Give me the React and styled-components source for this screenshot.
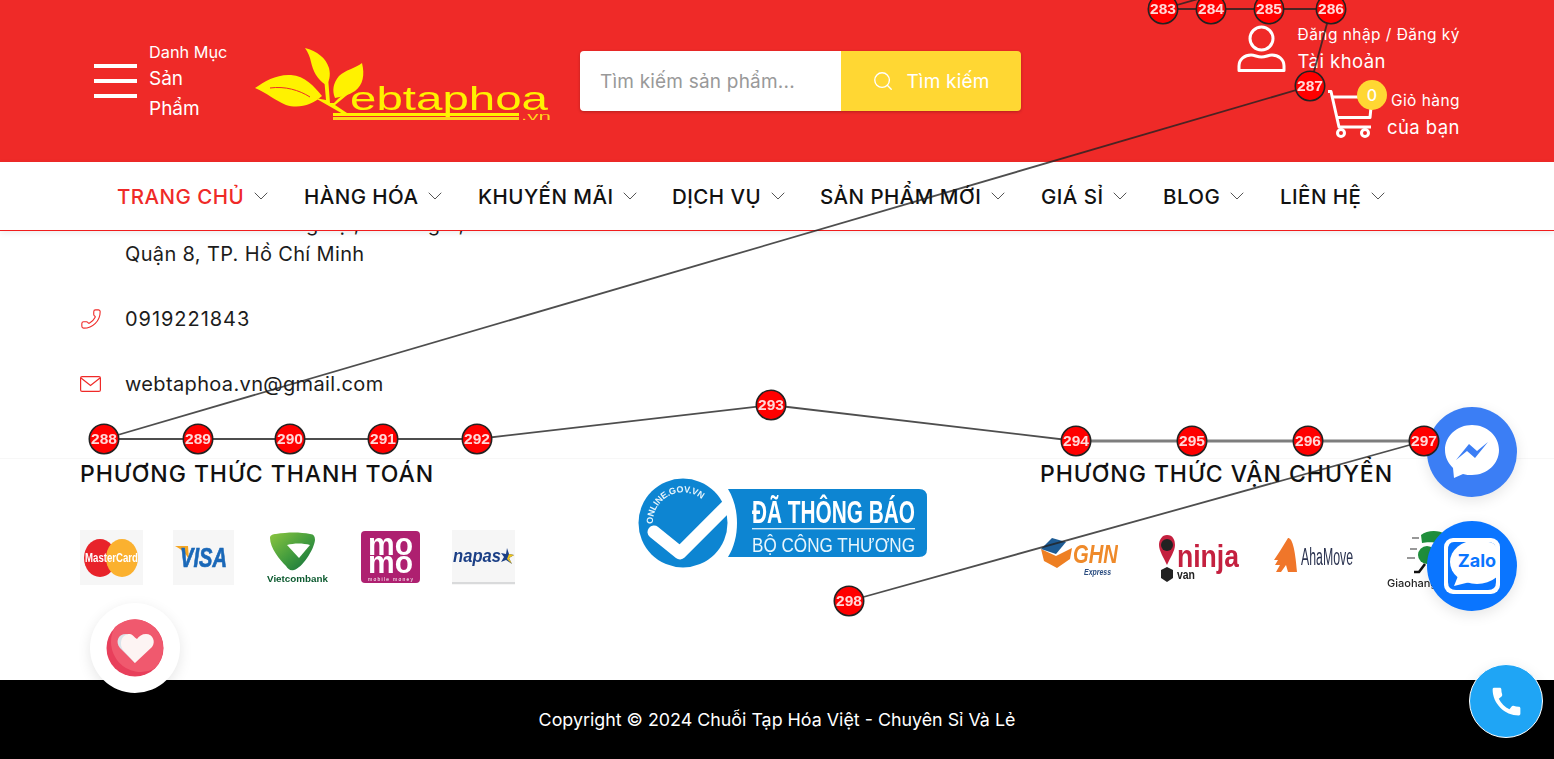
import React from 'react';
import styled, { createGlobalStyle } from 'styled-components';
import { ChevronDown, Search, Phone } from 'lucide-react';
import { MdCall } from 'react-icons/md';

const GlobalStyle = createGlobalStyle`
  html, body {
    margin: 0;
    padding: 0;
    background: #fff;
    overflow: hidden;
  }
  * { box-sizing: border-box; }
  body {
    font-family: Inter, "Noto Sans", sans-serif;
    color: #111;
  }
`;

const Page = styled.div`
  position: relative;
  width: 1554px;
  height: 759px;
  display: flex;
  flex-direction: column;
  overflow: hidden;
`;

const Header = styled.header`
  height: 162px;
  flex: none;
  background: #ef2a28;
  color: #fff;
  display: flex;
  align-items: center;
  padding: 0 94px 0 94px;
`;

const MenuToggle = styled.div`
  display: flex;
  align-items: center;
  gap: 12px;
  width: 161px;
`;

const Burger = styled.div`
  width: 43px;
  flex: none;
  display: flex;
  flex-direction: column;
  gap: 11px;
  & > span {
    display: block;
    height: 4px;
    background: #fff;
  }
`;

const MenuText = styled.div`
  width: 60px;
  margin-top: 2px;
  font-size: 19px;
  line-height: 30px;
  & > small {
    display: block;
    font-size: 16.3px;
    line-height: 24px;
    white-space: nowrap;
  }
`;

const LogoSvg = styled.svg`
  flex: none;
  display: block;
  margin-top: 10px;
  filter: blur(0.3px);
`;

const SearchBox = styled.div`
  display: flex;
  flex: none;
  width: 441px;
  height: 60px;
  margin-left: 25px;
  border-radius: 4px;
  overflow: hidden;
  box-shadow: 0 1px 3px rgba(0, 0, 0, 0.25);
`;

const SearchInput = styled.div`
  flex: 1;
  background: #fff;
  color: #999;
  font-size: 19px;
  letter-spacing: 0.2px;
  display: flex;
  align-items: center;
  padding-left: 20px;
`;

const SearchButton = styled.div`
  width: 180px;
  background: #ffd733;
  color: #fff;
  font-size: 19px;
  letter-spacing: 0.2px;
  display: flex;
  align-items: center;
  justify-content: center;
  gap: 12px;
`;

const UserArea = styled.div`
  margin-left: auto;
  display: flex;
  flex-direction: column;
  align-items: flex-end;
  gap: 12px;
`;

const UserRow = styled.div`
  display: flex;
  align-items: center;
  gap: ${({ $gap }) => $gap}px;
`;

const UserText = styled.div`
  text-align: ${({ $right }) => ($right ? 'right' : 'left')};
  font-size: 18.5px;
  letter-spacing: 0.45px;
  line-height: 27px;
  & > small {
    display: block;
    font-size: 15.5px;
    line-height: 27px;
    white-space: nowrap;
  }
`;

const CartIcon = styled.div`
  position: relative;
  width: 45px;
  height: 48px;
  & > svg { display: block; }
`;

const CartCount = styled.span`
  position: absolute;
  top: -10px;
  left: 29px;
  width: 30px;
  height: 30px;
  border-radius: 50%;
  background: #ffd733;
  color: #fff;
  font-size: 16px;
  font-weight: 500;
  display: flex;
  align-items: center;
  justify-content: center;
`;

const Nav = styled.nav`
  position: relative;
  z-index: 2;
  height: 69px;
  flex: none;
  background: #fff;
  border-bottom: 1px solid #f01c1c;
  box-shadow: 0 2px 6px rgba(0, 0, 0, 0.08);
  display: flex;
  align-items: center;
  padding-left: 117px;
`;

const NavItem = styled.div`
  width: ${({ $width }) => $width}px;
  display: flex;
  align-items: center;
  gap: 5px;
  font-size: 20.5px;
  font-weight: 500;
  letter-spacing: 0.45px;
  white-space: nowrap;
  color: ${({ $active }) => ($active ? '#ef2a28' : '#111')};
  & > svg { color: #555; }
`;

const Main = styled.main`
  flex: 1;
  min-height: 0;
  overflow: hidden;
  background: #fff;
`;

const ContactList = styled.div`
  margin-top: -22px;
  padding-left: 80px;
  display: flex;
  flex-direction: column;
  gap: 35px;
`;

const ContactRow = styled.div`
  display: flex;
  align-items: center;
  font-size: 20px;
  line-height: 30px;
  letter-spacing: ${({ $spacing }) => $spacing || 0.35}px;
  color: #1c1c1c;
`;

const ContactIcon = styled.div`
  width: 45px;
  flex: none;
  color: #ef2a28;
  display: flex;
  & > svg { display: block; }
`;

const Methods = styled.section`
  margin-top: 59px;
  padding-left: 80px;
  border-top: 1px solid #f7f7f7;
  display: grid;
  grid-template-columns: 558px 402px 1fr;
`;

const MethodTitle = styled.h3`
  margin: 0;
  font-size: 23px;
  line-height: 30px;
  font-weight: 500;
  letter-spacing: 0.95px;
  white-space: nowrap;
  color: #111;
`;

const MethodLogos = styled.div`
  margin-top: 41px;
  display: flex;
  align-items: flex-start;
`;

const BrandSvg = styled.svg`
  flex: none;
  display: block;
  margin-right: ${({ $gap }) => $gap}px;
  filter: blur(0.35px);
`;

const NoticeSvg = styled.svg`
  display: block;
  margin-top: 19px;
  filter: blur(0.3px);
`;

const Footer = styled.footer`
  height: 79px;
  flex: none;
  background: #000;
  color: #fff;
  font-size: 17.85px;
  font-weight: 400;
  display: flex;
  align-items: center;
  justify-content: center;
`;

const FloatButton = styled.div`
  position: absolute;
  z-index: 3;
  left: ${({ $x }) => $x}px;
  top: ${({ $y }) => $y}px;
  width: ${({ $size }) => $size}px;
  height: ${({ $size }) => $size}px;
  border-radius: 50%;
  background: ${({ $bg }) => $bg};
  border: ${({ $ring }) => ($ring ? '1px solid #fff' : 'none')};
  box-shadow: 0 4px 14px rgba(0, 0, 0, 0.1);
  display: flex;
  align-items: center;
  justify-content: center;
  color: #fff;
  & > svg { display: block; }
`;

const Graph = styled.svg`
  position: absolute;
  z-index: 4;
  left: 0;
  top: 0;
  pointer-events: none;
`;

const NodeLabel = styled.text`
  font-family: "Liberation Sans", Arial, sans-serif;
  font-size: 15.5px;
  font-weight: 700;
  fill: #fff;
  fill-opacity: 0.85;
  text-anchor: middle;
  filter: blur(0.4px);
`;

const navItems = [
  { label: 'TRANG CHỦ', width: 187, active: true },
  { label: 'HÀNG HÓA', width: 174 },
  { label: 'KHUYẾN MÃI', width: 194 },
  { label: 'DỊCH VỤ', width: 148 },
  { label: 'SẢN PHẨM MỚI', width: 221 },
  { label: 'GIÁ SỈ', width: 122 },
  { label: 'BLOG', width: 117 },
  { label: 'LIÊN HỆ', width: 120 },
];

const nodes = [
  [283, 1163, 9], [284, 1211, 9], [285, 1269, 9], [286, 1331, 9], [287, 1310, 86],
  [288, 104, 439], [289, 198, 439], [290, 290, 439], [291, 383, 439], [292, 477, 439],
  [293, 771, 405], [294, 1076, 441], [295, 1192, 441], [296, 1308, 441], [297, 1424, 441],
  [298, 849, 601],
];

const LogoMark = () => (
  <LogoSvg width="300" height="78" viewBox="0 0 300 78">
    <g fill="#fff200">
      <path d="M0 41 C10 34 22 27 36 28 C50 29 59 39 67 49 C57 58 44 62 31 58 C21 54 12 46 0 41 Z" />
      <path d="M50 1 C62 4 71 11 74 21 C76 29 74 35 71 38 C62 32 58 24 56 15 C55 10 53 5 50 1 Z" />
      <path d="M107 16 C110 28 108 38 100 44 C94 48 86 50 80 51 C77 44 78 36 84 29 C90 23 101 21 107 16 Z" />
      <path d="M69 30 L73 30 L75 56 L79 56 C84 50 90 46 97 44 L80 58 L92 66 L88 67 L60 51 L71 53 Z" />
      <rect x="78" y="66" width="186" height="3" />
      <rect x="78" y="70" width="186" height="3" fill="#ffd21c" />
    </g>
    <path d="M15 41 C30 39 44 43 55 50" stroke="#ef2a28" strokeWidth="1" fill="none" />
    <text x="95" y="63" fill="#fff200" fontFamily="Liberation Sans" fontSize="33" textLength="198" lengthAdjust="spacingAndGlyphs">ebtaphoa</text>
    <text x="266" y="73" fill="#ffd21c" fontFamily="Liberation Sans" fontSize="11" textLength="30" lengthAdjust="spacingAndGlyphs">.vn</text>
  </LogoSvg>
);

const UserGlyph = () => (
  <svg width="50" height="49" viewBox="0 0 50 49" fill="none" stroke="#fff" strokeWidth="3">
    <circle cx="24.5" cy="14.5" r="11.5" />
    <path d="M2 46.5 V42 C2 35 8 31 14 31 C18 31 20 33 24.5 33 C29 33 31 31 35 31 C41 31 47 35 47 42 V46.5 Z" strokeLinejoin="round" />
  </svg>
);

const CartGlyph = () => (
  <svg width="45" height="48" viewBox="0 0 45 48" fill="none" stroke="#fff" strokeWidth="3" strokeLinejoin="round">
    <path d="M0 1.5 H3 L11 37 H43" />
    <path d="M5 7 H44 L42 27.5 H9" />
    <circle cx="13" cy="43" r="3.5" />
    <circle cx="37" cy="43" r="3.5" />
  </svg>
);

const MasterCard = () => (
  <BrandSvg $gap={30} width="63" height="55" viewBox="0 0 63 55">
    <rect width="63" height="55" fill="#f6f6f6" />
    <ellipse cx="20" cy="28" rx="16" ry="19" fill="#e8232a" />
    <ellipse cx="42" cy="28" rx="16" ry="19" fill="#fbb12f" />
    <text x="5" y="32" fill="#fff" fontFamily="Liberation Sans" fontWeight="700" fontSize="12" textLength="53" lengthAdjust="spacingAndGlyphs">MasterCard</text>
  </BrandSvg>
);

const Visa = () => (
  <BrandSvg $gap={32} width="61" height="55" viewBox="0 0 61 55">
    <rect width="61" height="55" fill="#f6f6f6" />
    <path d="M2 16 H15 L16 30 C13 23 8 19 2 16 Z" fill="#f5a623" />
    <text x="7" y="37" fill="#1a68b8" stroke="#1a68b8" strokeWidth="0.7" fontFamily="Liberation Sans" fontWeight="700" fontStyle="italic" fontSize="28" textLength="47" lengthAdjust="spacingAndGlyphs">VISA</text>
  </BrandSvg>
);

const Vietcombank = () => (
  <BrandSvg $gap={32} width="63" height="55" viewBox="0 0 63 55">
    <defs>
      <linearGradient id="vcbShield" x1="0" y1="0" x2="1" y2="1">
        <stop offset="0" stopColor="#8cc63f" />
        <stop offset="0.55" stopColor="#3f9a3e" />
        <stop offset="1" stopColor="#0f6b3d" />
      </linearGradient>
    </defs>
    <path d="M4 8 C4 5 7 4 10 4 C22 2 34 2 44 4 C48 4 49 7 49 10 C48 20 36 38 28 40 C24 41 22 39 20 36 C14 30 4 18 4 8 Z" fill="url(#vcbShield)" />
    <path d="M21 15 C28 13 37 13 44 15 L33 28 Z" fill="#fff" />
    <text x="1" y="52" fill="#0c5a2f" fontFamily="Liberation Sans" fontWeight="700" fontSize="9" textLength="61" lengthAdjust="spacingAndGlyphs">Vietcombank</text>
  </BrandSvg>
);

const Momo = () => (
  <BrandSvg $gap={32} width="59" height="55" viewBox="0 0 59 55">
    <rect y="1" width="59" height="52" rx="4" fill="#ae2070" />
    <text x="7" y="25" fill="#fff" fontFamily="Liberation Sans" fontWeight="700" fontSize="32" textLength="45" lengthAdjust="spacingAndGlyphs">mo</text>
    <text x="7" y="43" fill="#fff" fontFamily="Liberation Sans" fontWeight="700" fontSize="32" textLength="45" lengthAdjust="spacingAndGlyphs">mo</text>
    <text x="7" y="50.5" fill="#fff" fontFamily="Liberation Sans" fontSize="5" textLength="45">mobile money</text>
  </BrandSvg>
);

const Napas = () => (
  <BrandSvg $gap={0} width="63" height="55" viewBox="0 0 63 55">
    <rect width="63" height="55" fill="#f6f6f6" />
    <rect y="52" width="63" height="2" fill="#d9dadb" />
    <text x="1" y="32" fill="#1b3f86" fontFamily="Liberation Sans" fontWeight="700" fontStyle="italic" fontSize="18" textLength="48" lengthAdjust="spacingAndGlyphs">napas</text>
    <path d="M55 18 L57 24 L62 25 L57 28 L60 34 L54 30 L49 32 L52 27 L49 23 L54 24 Z" fill="#1b3f86" />
    <path d="M57 24 L62 25 L57 28 L60 34 L55 29 Z" fill="#f0c419" />
  </BrandSvg>
);

const Ghn = () => (
  <BrandSvg $gap={41} width="78" height="55" viewBox="0 -4 78 55">
    <path d="M1 15 L16 22 L32 14 L30 25 L17 34 L4 27 Z" fill="#ee7f22" />
    <path d="M1 15 L12 4 L26 8 L16 20 Z" fill="#1e5b93" />
    <text x="33" y="29" fill="#ef8a2a" fontFamily="Liberation Sans" fontWeight="700" fontStyle="italic" fontSize="26" textLength="45" lengthAdjust="spacingAndGlyphs">GHN</text>
    <text x="44" y="41" fill="#2b4d80" fontFamily="Liberation Sans" fontWeight="700" fontStyle="italic" fontSize="9" textLength="27" lengthAdjust="spacingAndGlyphs">Express</text>
  </BrandSvg>
);

const Ninja = () => (
  <BrandSvg $gap={35} width="80" height="55" viewBox="0 -5 80 55">
    <path d="M8 0 C14 0 16 5 16 10 C16 16 11 23 8 30 C5 23 0 16 0 10 C0 5 3 0 8 0 Z" fill="#c4203f" />
    <circle cx="8" cy="10" r="6" fill="#222" />
    <path d="M2 35 L8 32 L14 35 V43 L8 47 L2 43 Z" fill="#222" />
    <text x="18" y="32" fill="#c4203f" fontFamily="Liberation Sans" fontWeight="700" fontSize="31" textLength="62" lengthAdjust="spacingAndGlyphs">ninja</text>
    <text x="18" y="44" fill="#222" fontFamily="Liberation Sans" fontWeight="700" fontSize="13" textLength="18" lengthAdjust="spacingAndGlyphs">van</text>
  </BrandSvg>
);

const AhaMove = () => (
  <BrandSvg $gap={33} width="80" height="55" viewBox="0 -5 80 55">
    <path d="M14 3 C18 3 21 12 23 37 H14 L12 30 L7 37 H2 L6 30 H1 L4 25 H0 L6 16 Z" fill="#f0762a" />
    <text x="27" y="30" fill="#2b3350" fontFamily="Liberation Sans" fontWeight="400" fontSize="23" textLength="52" lengthAdjust="spacingAndGlyphs">AhaMove</text>
  </BrandSvg>
);

const Giaohang = () => (
  <BrandSvg $gap={0} width="84" height="62" viewBox="0 0 84 62">
    <path d="M34 5 C40 0 52 0 58 4 L54 14 C48 12 40 12 35 13 Z" fill="#1f8f3c" />
    <circle cx="40" cy="25" r="9" fill="#1f8f3c" />
    <path d="M38 34 L32 42 L27 42 M42 34 L48 42" stroke="#111" strokeWidth="2.5" fill="none" />
    <path d="M25 8 H32 M23 19 H30 M20 28 H28" stroke="#777" strokeWidth="1.3" />
    <text x="0" y="57" fill="#222" fontFamily="Inter" fontWeight="500" fontSize="11">Giaohangnhanh</text>
  </BrandSvg>
);

const NoticeBadge = () => (
  <NoticeSvg width="292" height="94" viewBox="0 0 292 94">
    <defs>
      <path id="noticeArc" d="M15 46 A30 30 0 0 1 66 23" />
    </defs>
    <circle cx="45" cy="45" r="44.5" fill="#0d85d2" />
    <path d="M16 54 L42 75 L92 25" stroke="#fff" strokeWidth="13" strokeLinecap="round" strokeLinejoin="round" fill="none" />
    <text fill="#e8f5fc" fontFamily="Liberation Sans" fontWeight="700" fontSize="9" textLength="69">
      <textPath href="#noticeArc">ONLINE.GOV.VN</textPath>
    </text>
    <path d="M90 11 H281 Q289 11 289 19 V71 Q289 79 281 79 H90 C102 60 102 30 90 11 Z" fill="#0d85d2" />
    <text x="114" y="45" fill="#fff" fontFamily="Liberation Sans" fontWeight="700" fontSize="32" textLength="163" lengthAdjust="spacingAndGlyphs">ĐÃ THÔNG BÁO</text>
    <rect x="114" y="50" width="163" height="1.4" fill="#cfe9f8" />
    <text x="114" y="74" fill="#e8f5fc" fontFamily="Liberation Sans" fontSize="20" textLength="163" lengthAdjust="spacingAndGlyphs">BỘ CÔNG THƯƠNG</text>
  </NoticeSvg>
);

const HeartGlyph = () => (
  <svg width="58" height="58" viewBox="0 0 58 58">
    <circle cx="29" cy="29" r="28.5" fill="#e83f5b" />
    <path d="M9 8 A28.5 28.5 0 0 1 48 50 A30 30 0 0 1 9 8 Z" fill="#f0596e" />
    <path d="M29 44 L14 29 C9 23 12 15 20 15 C24 15 27 18 29 21 Z" fill="#dbe4ea" />
    <path d="M29 44 L17 31 C13 25 15 15 24 15 C26 15 28 18 31 20 C33 17 36 15 40 15 C47 15 50 23 46 28 Z" fill="#fdf4f3" />
  </svg>
);

const MessengerGlyph = () => (
  <svg width="56" height="56" viewBox="0 0 56 56">
    <path d="M28 1 C13 1 1 12 1 26 C1 33 4 39 9 44 L10 54 L19 50 C22 51 25 51 28 51 C43 51 55 40 55 26 C55 12 43 1 28 1 Z" fill="#fff" />
    <path d="M12 36 L25 20 L33 27 L44 18 L31 34 L23 27 Z" fill="#3b7ef5" />
  </svg>
);

const ZaloGlyph = () => (
  <svg width="56" height="56" viewBox="0 0 56 56">
    <rect width="56" height="56" rx="9" fill="#fff" />
    <path d="M10 4 H44 Q52 4 52 12 V44 Q52 52 44 52 H12 Q4 52 4 44 V12 Q4 4 10 4 Z" fill="#0a75ff" />
    <ellipse cx="33" cy="24" rx="27" ry="22" fill="#fff" />
    <path d="M14 38 L10 48 L26 44 Z" fill="#fff" />
    <path d="M44 4 Q52 4 52 12 V30 H34 V4 Z" fill="#fff" />
    <text x="33" y="29" fill="#0a75ff" textAnchor="middle" fontFamily="Inter" fontWeight="700" fontSize="18">Zalo</text>
  </svg>
);

const App = () => (
  <Page>
    <GlobalStyle />
    <Header>
      <MenuToggle>
        <Burger><span /><span /><span /></Burger>
        <MenuText>
          <small>Danh Mục</small>
          Sản Phẩm
        </MenuText>
      </MenuToggle>
      <LogoMark />
      <SearchBox>
        <SearchInput>Tìm kiếm sản phẩm...</SearchInput>
        <SearchButton>
          <Search size={22} strokeWidth={1.5} />
          Tìm kiếm
        </SearchButton>
      </SearchBox>
      <UserArea>
        <UserRow $gap={11}>
          <UserGlyph />
          <UserText>
            <small>Đăng nhập / Đăng ký</small>
            Tài khoản
          </UserText>
        </UserRow>
        <UserRow $gap={14}>
          <CartIcon>
            <CartGlyph />
            <CartCount>0</CartCount>
          </CartIcon>
          <UserText $right>
            <small>Giỏ hàng</small>
            của bạn
          </UserText>
        </UserRow>
      </UserArea>
    </Header>
    <Nav>
      {navItems.map((item) => (
        <NavItem key={item.label} $width={item.width} $active={item.active}>
          {item.label}
          <ChevronDown size={24} strokeWidth={1} />
        </NavItem>
      ))}
    </Nav>
    <Main>
      <ContactList>
        <ContactRow>
          <ContactIcon />
          <div>
            Số 9. Lô Thân Hưng Lợi, Phường 6,
            <br />
            Quận 8, TP. Hồ Chí Minh
          </div>
        </ContactRow>
        <ContactRow $spacing={0.95}>
          <ContactIcon>
            <Phone size={22} strokeWidth={1.2} style={{ transform: 'scaleX(-1)' }} />
          </ContactIcon>
          0919221843
        </ContactRow>
        <ContactRow>
          <ContactIcon>
            <svg width="21" height="16" viewBox="0 0 21 16" fill="none" stroke="currentColor" strokeWidth="1.2">
              <rect x="0.6" y="0.6" width="19.8" height="14.8" rx="1.5" />
              <path d="M1 2 L10.5 9.5 L20 2" />
            </svg>
          </ContactIcon>
          webtaphoa.vn@gmail.com
        </ContactRow>
      </ContactList>
      <Methods>
        <div>
          <MethodTitle>PHƯƠNG THỨC THANH TOÁN</MethodTitle>
          <MethodLogos>
            <MasterCard />
            <Visa />
            <Vietcombank />
            <Momo />
            <Napas />
          </MethodLogos>
        </div>
        <div>
          <NoticeBadge />
        </div>
        <div>
          <MethodTitle>PHƯƠNG THỨC VẬN CHUYỂN</MethodTitle>
          <MethodLogos>
            <Ghn />
            <Ninja />
            <AhaMove />
            <Giaohang />
          </MethodLogos>
        </div>
      </Methods>
    </Main>
    <Footer>Copyright © 2024 Chuỗi Tạp Hóa Việt - Chuyên Sỉ Và Lẻ</Footer>

    <FloatButton $x={90} $y={603} $size={90} $bg="#fff"><HeartGlyph /></FloatButton>
    <FloatButton $x={1427} $y={407} $size={90} $bg="#3b7ef5"><MessengerGlyph /></FloatButton>
    <FloatButton $x={1427} $y={521} $size={90} $bg="#0a75ff"><ZaloGlyph /></FloatButton>
    <FloatButton $x={1469} $y={664} $size={74} $bg="#1fa5f5" $ring><MdCall size={37} /></FloatButton>

    <Graph width="1554" height="759" viewBox="0 0 1554 759">
      <line x1="1163" y1="9" x2="1205" y2="-3" stroke="#222" strokeOpacity="0.8" strokeWidth="1.8" />
      {nodes.slice(1).map(([id, x, y], i) => {
        const [, px, py] = nodes[i];
        const thick = id >= 295 && id <= 297;
        return (
          <line
            key={id}
            x1={px}
            y1={py}
            x2={x}
            y2={y}
            stroke={thick ? '#777' : '#222'}
            strokeOpacity={thick ? 0.95 : 0.8}
            strokeWidth={thick ? 3 : 1.8}
          />
        );
      })}
      {nodes.map(([id, x, y]) => (
        <g key={id}>
          <circle cx={x} cy={y} r="14.7" fill="#f00" stroke="#222" strokeWidth="1.6" />
          <NodeLabel x={x} y={y + 5}>{id}</NodeLabel>
        </g>
      ))}
    </Graph>
  </Page>
);

export default App;
